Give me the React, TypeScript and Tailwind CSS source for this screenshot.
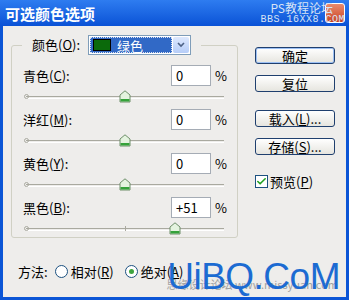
import { Check } from "lucide-react";

const rows = [
  { label: "青色", key: "C", value: "0", pos: 0 },
  { label: "洋红", key: "M", value: "0", pos: 0 },
  { label: "黄色", key: "Y", value: "0", pos: 0 },
  { label: "黑色", key: "B", value: "+51", pos: 51 },
];

const buttons = [
  { label: "确定", focus: true },
  { label: "复位" },
  { label: "载入(", key: "L", tail: ")..." },
  { label: "存储(", key: "S", tail: ")..." },
];

function Thumb() {
  return (
    <svg width="12" height="13" viewBox="0 0 12 13" className="block">
      <path d="M1 5 L6 0.8 L11 5 L11 12 L1 12 Z" fill="#e4f3df" stroke="#6f8f6a" />
      <rect x="1.5" y="9" width="9" height="2.5" fill="#35a23a" />
    </svg>
  );
}

function Slider({ pos }: { pos: number }) {
  return (
    <div className="relative ml-[14px] mt-[10px] h-[3px] w-[198px] border-t border-[#a9a99f] border-b border-b-white">
      <span className="absolute -left-[2px] -top-[3px] h-[5px] w-[5px] rounded-full border border-[#a9a99f]" />
      {pos !== 0 && (
        <span className="absolute left-1/2 -top-[3px] h-[5px] w-[1px] bg-[#a9a99f]" />
      )}
      <span
        className="absolute -top-[7px]"
        style={{ left: `calc(${50 + pos / 2}% - 6px)` }}
      >
        <Thumb />
      </span>
    </div>
  );
}

export default function App() {
  return (
    <div
      className="flex h-[300px] w-[349px] flex-col bg-[#0b55d6] text-[13px] text-black"
      style={{ fontFamily: '"Noto Sans CJK SC", "Liberation Sans", sans-serif' }}
    >
      {/* title bar */}
      <div className="relative flex h-[26px] items-center bg-gradient-to-b from-[#2e7cf0] to-[#0a52d6] pl-[5px]">
        <span className="text-[15px] font-bold leading-none text-white">可选颜色选项</span>
        <span className="absolute right-[4px] top-[3px] h-[20px] w-[20px] rounded-[3px] border border-white bg-gradient-to-b from-[#e98b6e] to-[#c9401d]" />
        <div className="absolute right-[4px] top-[2px] flex flex-col items-end leading-none text-[#d8e4f5]">
          <span className="mr-[12px] text-[12px]" style={{ fontFamily: '"Noto Sans CJK SC", serif' }}>PS教程论坛</span>
          <span className="mt-[1px] text-[10px] tracking-[0.5px]" style={{ fontFamily: '"Liberation Mono", monospace' }}>BBS.16XX8.COM</span>
        </div>
      </div>

      {/* body */}
      <div className="relative mx-[3px] mb-[3px] flex-1 bg-[#eeedeb]">
        <div className="flex pl-[8px] pt-[9px]">
          <fieldset className="h-[203px] w-[227px] rounded-[3px] border border-[#d0d0c4] px-0 pb-0">
            <legend className="ml-[10px] flex items-center px-[10px]">
              <span className="mr-[8px]">
                颜色(<span className="underline">O</span>):
              </span>
              <div className="flex h-[20px] w-[103px] items-center border border-[#7f9db9] bg-white p-[1px]">
                <div className="flex h-full flex-1 items-center border border-dotted border-[#d8e0f0] bg-[#3169c6] pl-[2px] text-white">
                  <span className="h-[12px] w-[18px] border border-black bg-[#0b6a0b]" />
                  <span className="ml-[6px] leading-none">绿色</span>
                </div>
                <div className="ml-[1px] flex h-full w-[16px] items-center justify-center rounded-[2px] bg-gradient-to-b from-[#dde8fd] to-[#b6cdf8]">
                  <svg width="8" height="6" viewBox="0 0 8 6">
                    <path d="M1 1 L4 4 L7 1" fill="none" stroke="#4d6185" strokeWidth="1.6" />
                  </svg>
                </div>
              </div>
            </legend>
            <div className="flex flex-col pt-[10px]">
              {rows.map((r) => (
                <div key={r.key} className="flex h-[44px] flex-col">
                  <div className="flex h-[21px] items-center">
                    <span className="ml-[11px] w-[148px]">
                      {r.label}(<span className="underline">{r.key}</span>):
                    </span>
                    <div className="flex h-[21px] w-[40px] items-center border border-[#a5acb5] bg-white pl-[4px]">
                      {r.value}
                    </div>
                    <span className="ml-[4px]">%</span>
                  </div>
                  <Slider pos={r.pos} />
                </div>
              ))}
            </div>
          </fieldset>

          <div className="ml-[17px] flex flex-col pt-[12px]">
            {buttons.map((b, i) => (
              <button
                key={b.label}
                className={`flex h-[17px] w-[80px] items-center justify-center rounded-[3px] border border-[#1f3f6e] bg-gradient-to-b from-white to-[#e6e5df] leading-none ${
                  b.focus ? "shadow-[inset_0_0_0_1px_#9cc0f4]" : ""
                } ${i === 1 ? "mt-[11px]" : i === 2 ? "mt-[18px]" : i === 3 ? "mt-[11px]" : ""}`}
              >
                {b.label}
                {b.key && <span className="underline">{b.key}</span>}
                {b.tail}
              </button>
            ))}
            <div className="mt-[17px] flex items-center">
              <span className="flex h-[13px] w-[13px] items-center justify-center border border-[#1c5180] bg-white">
                <Check size={11} strokeWidth={3.5} color="#21a121" />
              </span>
              <span className="ml-[2px]">
                预览(<span className="underline">P</span>)
              </span>
            </div>
          </div>
        </div>

        <div className="ml-[15px] mt-[24px] flex items-center">
          <span>方法:</span>
          <span className="ml-[7px] h-[13px] w-[13px] rounded-full border border-[#1c5180] bg-white" />
          <span className="ml-[3px]">
            相对(<span className="underline">R</span>)
          </span>
          <span className="ml-[11px] flex h-[13px] w-[13px] items-center justify-center rounded-full border border-[#1c5180] bg-white">
            <span className="h-[5px] w-[5px] rounded-full bg-[#3ea43e]" />
          </span>
          <span className="ml-[3px]">
            绝对(<span className="underline">A</span>)
          </span>
        </div>

        {/* watermark */}
        <span className="absolute bottom-[7px] right-[8px] text-[11px] leading-none text-[#a0a0a0]">
          思缘设计论坛 www.missyuan.com
        </span>
        <span
          className="absolute bottom-[2px] right-[6px] text-[37px] leading-none tracking-[-0.5px] text-[#1c6bd2]"
          style={{ fontFamily: '"Liberation Sans", sans-serif' }}
        >
          UiBQ.CoM
        </span>
      </div>
    </div>
  );
}
